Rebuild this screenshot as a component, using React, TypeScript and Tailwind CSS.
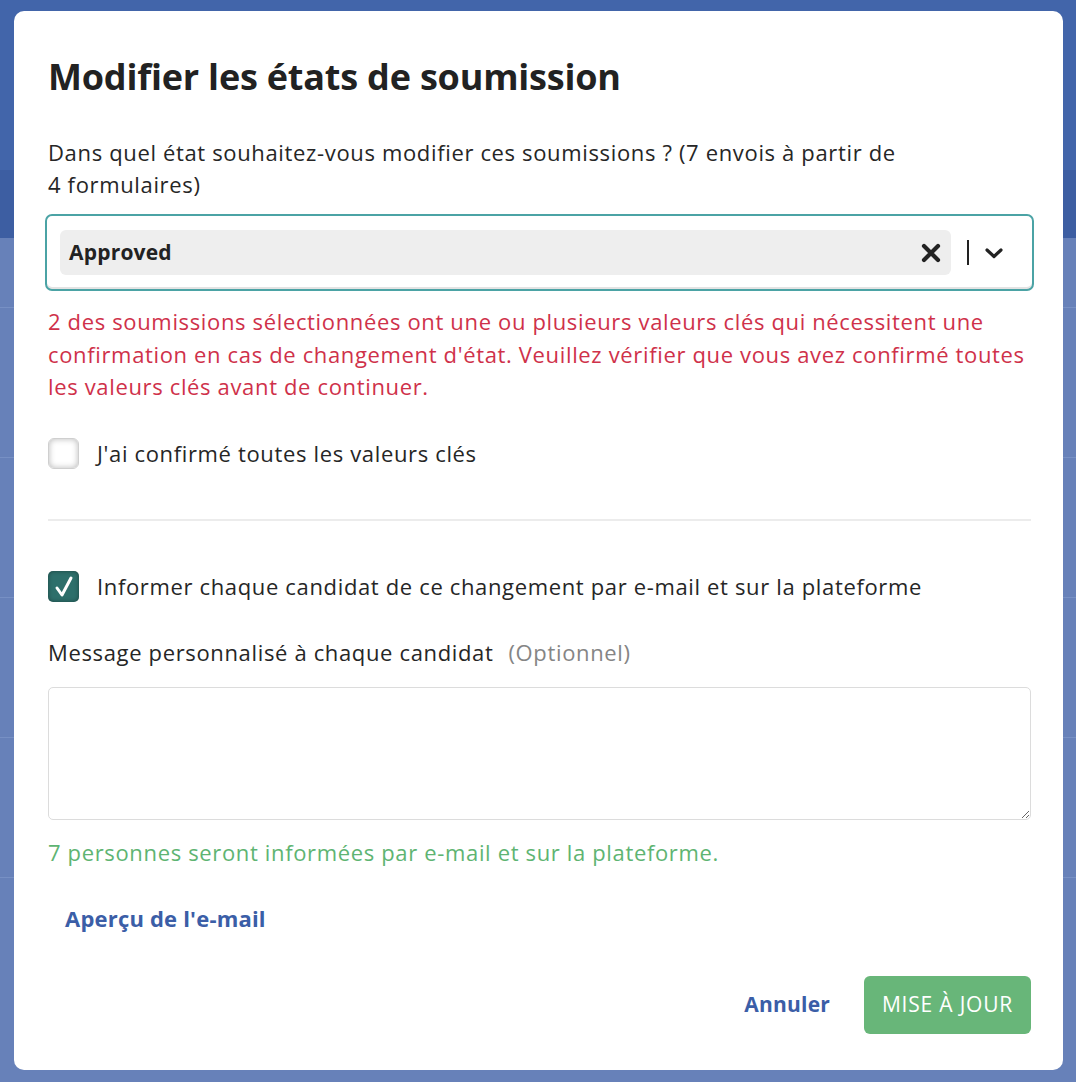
import React from "react";

const font = { fontFamily: '"Open Sans", "Noto Sans", sans-serif' };

export default function App() {
  return (
    <div className="relative w-[1076px] h-[1082px] overflow-hidden bg-[#6781b9]" style={font}>
      {/* blurred page behind the dialog */}
      <div className="absolute inset-0 flex flex-col">
        <div className="h-[170px] bg-[#4265aa]" />
        <div className="h-[68px] bg-[#3d5ea2]" />
        <div className="flex-1 flex flex-col bg-[#6781b9]">
          <div className="h-[70px] border-b border-[#7790c4]" />
          <div className="h-[150px] border-b border-[#7790c4]" />
          <div className="h-[140px] border-b border-[#7790c4]" />
          <div className="h-[140px] border-b border-[#7790c4]" />
          <div className="h-[140px] border-b border-[#7790c4]" />
        </div>
      </div>

      <div className="relative ml-[14px] mt-[11px] w-[1049px] h-[1059px] rounded-[10px] bg-white pl-[34px] pr-[32px] pt-[45px] flex flex-col text-[#262626]">
        <h1 className="text-[36px] leading-[42px] font-bold tracking-[-0.2px] text-[#222]">
          Modifier les états de soumission
        </h1>

        <p className="mt-[38px] text-[22px] leading-[32px] tracking-[0.65px] whitespace-nowrap">
          Dans quel état souhaitez-vous modifier ces soumissions ? (7 envois à partir de
          <br />4 formulaires)
        </p>

        <div className="mt-[14px] -mx-[3px] h-[77px] rounded-[7px] border-2 border-[#4ba3a5] shadow-[inset_0_-2px_0_#e3e3e3] flex items-center pl-[13px] pr-[28px]">
          <div className="flex-1 h-[45px] rounded-[6px] bg-[#eeeeee] flex items-center pl-[9px] pr-[9px]">
            <span className="flex-1 text-[21px] font-bold tracking-[0.2px] text-[#222]">Approved</span>
            <svg width="22" height="22" viewBox="0 0 22 22">
              <path d="M4 4 L18 18 M18 4 L4 18" stroke="#222" strokeWidth="4.2" strokeLinecap="round" />
            </svg>
          </div>
          <div className="ml-[16px] w-[2px] h-[25px] bg-[#222]" />
          <svg className="ml-[15px]" width="20" height="14" viewBox="0 0 20 14">
            <path d="M3 4 L10 10.5 L17 4" stroke="#222" strokeWidth="3.2" fill="none" strokeLinecap="round" strokeLinejoin="round" />
          </svg>
        </div>

        <p className="mt-[14px] text-[22px] leading-[32.5px] tracking-[0.65px] whitespace-nowrap text-[#cf314a]">
          2 des soumissions sélectionnées ont une ou plusieurs valeurs clés qui nécessitent une
          <br />
          confirmation en cas de changement d'état. Veuillez vérifier que vous avez confirmé toutes
          <br />
          les valeurs clés avant de continuer.
        </p>

        <label className="mt-[35px] flex items-center h-[32px]">
          <span className="w-[31px] h-[31px] rounded-[6px] border border-[#cfcfcf] bg-white shadow-[inset_0_0_6px_rgba(0,0,0,0.28)]" />
          <span className="ml-[18px] text-[22px] tracking-[0.65px] text-[#262626]">J'ai confirmé toutes les valeurs clés</span>
        </label>

        <div className="mt-[49px] h-[2px] bg-[#ececec]" />

        <label className="mt-[50px] flex items-center h-[32px]">
          <span className="w-[31px] h-[31px] rounded-[5px] bg-[#2d6f6b] shadow-[inset_0_0_4px_rgba(0,0,0,0.4)] flex items-center justify-center">
            <svg width="22" height="24" viewBox="0 0 22 24">
              <path d="M4 13 L9 20 L18 3" stroke="#fff" strokeWidth="3" fill="none" strokeLinecap="round" strokeLinejoin="round" />
            </svg>
          </span>
          <span className="ml-[18px] text-[22px] tracking-[0.65px] whitespace-nowrap text-[#262626]">
            Informer chaque candidat de ce changement par e-mail et sur la plateforme
          </span>
        </label>

        <div className="mt-[34px] h-[32px] flex items-center text-[22px] tracking-[0.65px]">
          <span className="text-[#262626]">Message personnalisé à chaque candidat</span>
          <span className="ml-[15px] text-[#858585]">(Optionnel)</span>
        </div>

        <textarea className="mt-[18px] h-[133px] w-full rounded-[5px] border border-[#dcdcdc] resize-y outline-none" />

        <p className="mt-[16px] text-[22px] leading-[32px] tracking-[0.65px] whitespace-nowrap text-[#5eb472]">
          7 personnes seront informées par e-mail et sur la plateforme.
        </p>

        <a className="mt-[34px] ml-[17px] text-[22px] leading-[32px] font-bold tracking-[0.2px] text-[#3b5ea7]">
          Aperçu de l'e-mail
        </a>

        <div className="mt-[42px] flex items-center justify-end">
          <button className="text-[21px] font-bold tracking-[0.2px] text-[#3b5ea7]">Annuler</button>
          <button className="ml-[34px] w-[167px] h-[58px] rounded-[6px] bg-[#68b679] text-white text-[21px] tracking-[0.8px]">
            MISE À JOUR
          </button>
        </div>
      </div>
    </div>
  );
}
